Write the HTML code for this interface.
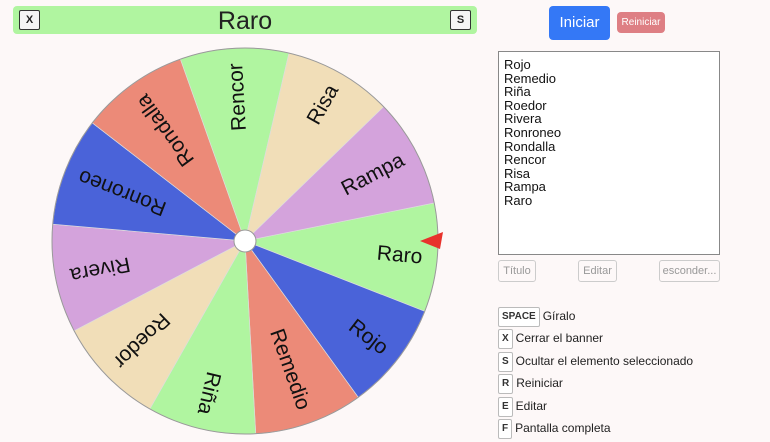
<!DOCTYPE html>
<html><head><meta charset="utf-8"><style>
body{margin:0;width:770px;height:442px;background:#fdf8f8;font-family:"Liberation Sans",sans-serif;position:relative;overflow:hidden}
.banner{position:absolute;left:13px;top:6px;width:464px;height:28px;background:#b0f5a0;border-radius:4px;text-align:center;font-size:25px;line-height:30px;color:#222}
.k{position:absolute;top:4px;width:19px;height:18px;border:1px solid #333;border-radius:2px;background:#f4f4f4;font-size:11px;line-height:18px;font-weight:bold}
.btn{position:absolute;color:#fff;text-align:center;border-radius:4px}
textarea{position:absolute;left:498px;top:51px;width:215px;height:196px;border:1px solid #888;padding:6px 0 0 5px;margin:0;resize:none;font-family:"Liberation Sans",sans-serif;font-size:13px;line-height:13.6px;background:#fff;color:#111;overflow:hidden}
.sb{position:absolute;top:260px;height:20px;border:1px solid #ccc;border-radius:3px;font-size:11px;line-height:20px;text-align:center;color:#999;background:#fdf8f8}
.row{position:absolute;left:498px;font-size:12px;color:#222;height:20px;line-height:20px}
.row span{display:inline-block;border:1px solid #bbb;border-radius:2px;padding:0 3px;font-size:10px;font-weight:bold;line-height:18px;margin-right:3px;background:#fff;vertical-align:middle;color:#333}
</style></head><body>
<div class="banner">Raro<div class="k" style="left:6px">X</div><div class="k" style="right:6px">S</div></div>
<div class="btn" style="left:549px;top:6px;width:61px;height:34px;background:#3478f6;font-size:15px;line-height:34px">Iniciar</div>
<div class="btn" style="left:617px;top:12px;width:48px;height:21px;background:#de7f84;font-size:10px;line-height:21px">Reiniciar</div>
<svg style="position:absolute;left:0;top:0" width="470" height="442">
<g font-family="Liberation Sans, sans-serif" font-size="21" fill="#111">
<g transform="translate(245 241) rotate(5)"><path d="M0 0L185.2 -54.4A193 193 0 0 1 185.2 54.4Z" fill="#b0f5a0" stroke="#ddd" stroke-width=".7"/><text x="178" y="7" text-anchor="end">Raro</text></g>
<g transform="translate(245 241) rotate(37.727)"><path d="M0 0L185.2 -54.4A193 193 0 0 1 185.2 54.4Z" fill="#4a63d9" stroke="#ddd" stroke-width=".7"/><text x="178" y="7" text-anchor="end">Rojo</text></g>
<g transform="translate(245 241) rotate(70.455)"><path d="M0 0L185.2 -54.4A193 193 0 0 1 185.2 54.4Z" fill="#ec8a78" stroke="#ddd" stroke-width=".7"/><text x="178" y="7" text-anchor="end">Remedio</text></g>
<g transform="translate(245 241) rotate(103.182)"><path d="M0 0L185.2 -54.4A193 193 0 0 1 185.2 54.4Z" fill="#b0f5a0" stroke="#ddd" stroke-width=".7"/><text x="178" y="7" text-anchor="end">Riña</text></g>
<g transform="translate(245 241) rotate(135.909)"><path d="M0 0L185.2 -54.4A193 193 0 0 1 185.2 54.4Z" fill="#f1deb8" stroke="#ddd" stroke-width=".7"/><text x="178" y="7" text-anchor="end">Roedor</text></g>
<g transform="translate(245 241) rotate(168.636)"><path d="M0 0L185.2 -54.4A193 193 0 0 1 185.2 54.4Z" fill="#d4a3dc" stroke="#ddd" stroke-width=".7"/><text x="178" y="7" text-anchor="end">Rivera</text></g>
<g transform="translate(245 241) rotate(201.364)"><path d="M0 0L185.2 -54.4A193 193 0 0 1 185.2 54.4Z" fill="#4a63d9" stroke="#ddd" stroke-width=".7"/><text x="178" y="7" text-anchor="end">Ronroneo</text></g>
<g transform="translate(245 241) rotate(234.091)"><path d="M0 0L185.2 -54.4A193 193 0 0 1 185.2 54.4Z" fill="#ec8a78" stroke="#ddd" stroke-width=".7"/><text x="178" y="7" text-anchor="end">Rondalla</text></g>
<g transform="translate(245 241) rotate(266.818)"><path d="M0 0L185.2 -54.4A193 193 0 0 1 185.2 54.4Z" fill="#b0f5a0" stroke="#ddd" stroke-width=".7"/><text x="178" y="7" text-anchor="end">Rencor</text></g>
<g transform="translate(245 241) rotate(299.545)"><path d="M0 0L185.2 -54.4A193 193 0 0 1 185.2 54.4Z" fill="#f1deb8" stroke="#ddd" stroke-width=".7"/><text x="178" y="7" text-anchor="end">Risa</text></g>
<g transform="translate(245 241) rotate(332.273)"><path d="M0 0L185.2 -54.4A193 193 0 0 1 185.2 54.4Z" fill="#d4a3dc" stroke="#ddd" stroke-width=".7"/><text x="178" y="7" text-anchor="end">Rampa</text></g>
</g>
<circle cx="245" cy="241" r="193" fill="none" stroke="#999" stroke-width="1"/>
<circle cx="245" cy="241" r="11" fill="#fff" stroke="#999" stroke-width="1"/>
<path d="M420 241L443 232L440 249Z" fill="#e8322c"/>
</svg>
<textarea>Rojo
Remedio
Riña
Roedor
Rivera
Ronroneo
Rondalla
Rencor
Risa
Rampa
Raro</textarea>
<div class="sb" style="left:498px;width:36px">Título</div>
<div class="sb" style="left:578px;width:37px">Editar</div>
<div class="sb" style="left:659px;width:59px">esconder...</div>
<div class="row" style="top:306px"><span>SPACE</span>Gíralo</div>
<div class="row" style="top:328px"><span>X</span>Cerrar el banner</div>
<div class="row" style="top:351px"><span>S</span>Ocultar el elemento seleccionado</div>
<div class="row" style="top:373px"><span>R</span>Reiniciar</div>
<div class="row" style="top:396px"><span>E</span>Editar</div>
<div class="row" style="top:418px"><span>F</span>Pantalla completa</div>
</body></html>
